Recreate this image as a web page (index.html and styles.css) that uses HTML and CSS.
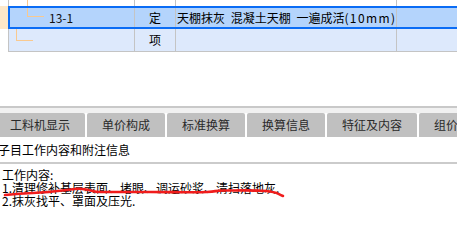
FILE: index.html
```html
<!DOCTYPE html>
<html lang="zh-CN">
<head>
<meta charset="utf-8">
<title>子目工作内容</title>
<link rel="stylesheet" href="styles.css">
</head>
<body>
<div class="page">
  <div class="grid">
    <div class="row row-top">
      <div class="ind"></div>
      <div class="main">
        <div class="c c-code"><span class="vline"></span></div>
        <div class="c c-type"></div>
        <div class="c c-name"></div>
        <div class="c c-rest"></div>
      </div>
    </div>
    <div class="row row-sel">
      <div class="ind ind-sel"></div>
      <div class="main">
        <div class="c c-code"><span class="elbow elbow-1"></span><span class="code">13-1</span></div>
        <div class="c c-type">定</div>
        <div class="c c-name">天棚抹灰 混凝土天棚 一遍成活<span class="unit">(10mm)</span></div>
        <div class="c c-rest"></div>
      </div>
    </div>
    <div class="row row-alt">
      <div class="ind"></div>
      <div class="main">
        <div class="c c-code"><span class="elbow elbow-2"></span></div>
        <div class="c c-type">项</div>
        <div class="c c-name"></div>
        <div class="c c-rest"></div>
      </div>
    </div>
  </div>

  <div class="blank"></div>

  <div class="tabbar">
    <div class="tabs">
      <div class="tab">工料机显示</div>
      <div class="tab">单价构成</div>
      <div class="tab">标准换算</div>
      <div class="tab">换算信息</div>
      <div class="tab">特征及内容</div>
      <div class="tab">组价方案</div>
    </div>
  </div>

  <div class="subtitle">子目工作内容和附注信息</div>

  <div class="content">
    <div class="line">工作内容:</div>
    <div class="line">1.清理修补基层表面、堵眼、调运砂浆、清扫落地灰.</div>
    <div class="line">2.抹灰找平、罩面及压光.</div>
    <svg class="scribble" width="300" height="40" viewBox="0 0 300 40" aria-hidden="true">
      <path d="M5 31 C 10 30.5, 20 29.5, 33 29 S 55 27.5, 67 26 S 80 24.5, 86 25.5 S 94 28, 100 28 S 130 28, 150 28 S 195 28.5, 207 28 S 212 26.5, 225 26.5 S 255 26, 266 27 S 275 28.5, 283 32" fill="none" stroke="#f01c1c" stroke-width="2.6" stroke-linecap="round" stroke-linejoin="round"/>
    </svg>
  </div>
</div>
</body>
</html>
```

FILE: styles.css
```css
html, body {
  margin: 0;
  padding: 0;
  background: #ffffff;
}

body {
  font-family: "Noto Sans CJK SC", "Noto Sans", sans-serif;
  font-size: 12px;
  color: #000;
}

.page {
  width: 457px;
  height: 237px;
  overflow: hidden;
}

/* ---------- grid ---------- */
.grid {
  display: flex;
  flex-direction: column;
}

.row {
  display: flex;
}

.ind {
  width: 8px;
  flex: none;
}

.ind-sel {
  background: #fde8c9;
}

.main {
  flex: 1;
  display: flex;
  border-left: 1px solid #c4c4c4;
}

.c {
  display: flex;
  align-items: center;
  border-right: 1px solid #c4c4c4;
  flex: none;
  white-space: nowrap;
  line-height: 14px;
}

.c-code { width: 125px; }
.c-type { width: 40px; justify-content: center; }
.c-name { width: 219px; padding-left: 1px; word-spacing: 3px; }
.c-rest { flex: 1; border-right: none; }

.unit {
  letter-spacing: 1.4px;
  word-spacing: 0;
}

.row-top {
  height: 6px;
}

.row-top .c {
  align-items: stretch;
}

.vline {
  display: block;
  margin-left: 18px;
  border-left: 1px solid #f9c98f;
}

.row-sel {
  height: 23px;
}

.row-sel .main {
  background: #b4d4fc;
  border: 2px solid #0a6cf5;
  border-right: none;
}

.row-sel .c-code { width: 124px; }

.row-alt {
  height: 23px;
}

.row-alt .main {
  background: #dde9fc;
  border-bottom: 1px solid #c4c4c4;
}

.elbow {
  display: block;
  align-self: flex-start;
  border-left: 1px solid #f9c98f;
  border-bottom: 1px solid #f9c98f;
  flex: none;
}

.elbow-1 {
  margin-left: 17px;
  width: 16px;
  height: 8px;
}

.elbow-2 {
  margin-left: 7px;
  width: 16px;
  height: 11px;
}

.code {
  margin-left: 5px;
  color: #111;
}

/* ---------- blank area ---------- */
.blank {
  height: 54px;
}

/* ---------- tabs ---------- */
.tabbar {
  border-top: 2px solid #c9c9c9;
  padding-top: 5px;
  background: #f1f1f1;
}

.tabs {
  display: flex;
  gap: 2px;
  margin-left: -5px;
  background: #ffffff;
}

.tab {
  flex: none;
  height: 24px;
  line-height: 24px;
  padding: 0 15px;
  background: #c0c0c0;
  color: #2a2a2a;
  border-radius: 2px 2px 0 0;
  white-space: nowrap;
}

/* ---------- subtitle ---------- */
.subtitle {
  height: 25px;
  line-height: 25px;
  margin-left: -2px;
  border-bottom: 2px solid #cbcbcb;
  white-space: nowrap;
}

/* ---------- content ---------- */
.content {
  position: relative;
  padding: 4px 0 0 2px;
}

.line {
  line-height: 13px;
  height: 13px;
  white-space: nowrap;
}

.scribble {
  position: absolute;
  left: 0;
  top: 0;
}
```
